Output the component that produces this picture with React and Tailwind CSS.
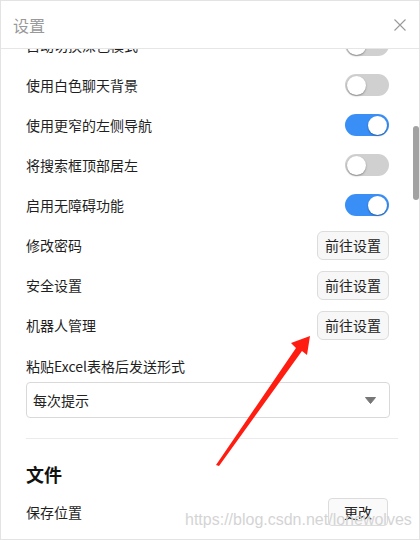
import React from 'react';

const Toggle = ({ on }) => (
	<div
		className={`flex h-[22px] w-[44px] items-center rounded-full px-[2px] ${on ? 'justify-end bg-[#3a8ff6]' : 'justify-start bg-[#d0d0d0]'}`}
	>
		<div className="h-[19px] w-[19px] rounded-full bg-white shadow-[0_1px_2px_rgba(0,0,0,0.35)]" />
	</div>
);

const GoButton = ({ children }) => (
	<button
		type="button"
		className="h-[29px] rounded-[6px] border border-[#dcdcdc] bg-[#f7f7f7] px-[7px] text-[14px] leading-none text-[#222]"
	>
		{children}
	</button>
);

const Row = ({ label, children }) => (
	<div className="flex h-[40px] items-center justify-between pr-px">
		<span className="text-[14px] text-[#1f1f1f]">{label}</span>
		{children}
	</div>
);

export default function App() {
	return (
		<div
			className="relative flex h-[540px] w-[420px] flex-col overflow-hidden border border-[#e3e3e3] bg-white"
			style={{ fontFamily: '"Noto Sans CJK SC", "Noto Sans", sans-serif' }}
		>
			<div className="relative z-10 flex h-[48px] shrink-0 items-center justify-between border-b border-[#e6e6e6] bg-white pl-[12px] pr-[13px]">
				<span className="text-[16px] text-[#999]">设置</span>
				<svg viewBox="0 0 12 12" className="h-[12px] w-[12px]" aria-hidden="true">
					<path d="M0.5 0.5l11 11M11.5 0.5l-11 11" stroke="#9a9a9a" strokeWidth="1.1" fill="none" />
				</svg>
			</div>

			<div className="flex-1 overflow-hidden">
				<div className="mt-[-24px] w-[364px] pl-[25px] box-content">
					<Row label="自动切换深色模式"><Toggle on={false} /></Row>
					<Row label="使用白色聊天背景"><Toggle on={false} /></Row>
					<Row label="使用更窄的左侧导航"><Toggle on /></Row>
					<Row label="将搜索框顶部居左"><Toggle on={false} /></Row>
					<Row label="启用无障碍功能"><Toggle on /></Row>
					<Row label="修改密码"><GoButton>前往设置</GoButton></Row>
					<Row label="安全设置"><GoButton>前往设置</GoButton></Row>
					<Row label="机器人管理"><GoButton>前往设置</GoButton></Row>

					<div className="mt-[11px] h-5 text-[14px] leading-5 text-[#1f1f1f]">粘贴Excel表格后发送形式</div>
					<div className="mt-[6px] flex h-[36px] items-center justify-between rounded-[4px] border border-[#d9d9d9] pl-[6px] pr-[13px]">
						<span className="text-[14px] text-[#222]">每次提示</span>
						<svg viewBox="0 0 11 7" className="h-[7px] w-[11px]" aria-hidden="true">
							<path d="M0.5 0.5h10l-5 6z" fill="#777" stroke="#777" strokeLinejoin="round" />
						</svg>
					</div>

					<div className="mt-[20px] h-px w-[372px] bg-[#ebebeb]" />

					<div className="mt-[21px] text-[18px] font-bold leading-[28px] text-[#111]">文件</div>
					<div className="mt-[4px] flex h-[40px] items-center justify-between pr-[2px]">
						<span className="text-[14px] text-[#1f1f1f]">保存位置</span>
						<button
							type="button"
							className="h-[28px] w-[60px] rounded-[4px] border border-[#dcdcdc] bg-[#fafafa] text-[14px] leading-none text-[#222]"
						>
							更改
						</button>
					</div>
				</div>
			</div>

			<div className="absolute left-[412px] top-[125px] h-[74px] w-[6px] rounded-full bg-[#a2a2a2]" />

			<svg className="pointer-events-none absolute left-[-1px] top-[-1px] h-[540px] w-[420px]" viewBox="0 0 420 540" aria-hidden="true">
				<polygon points="216,465 296,348 291,343 310,336 307,355 302,351 219,466" fill="#ff1d12" />
			</svg>

			<div
				className="pointer-events-none absolute left-[184px] top-[511px] text-[16px] leading-4 text-[#d4d4d4]"
				style={{ fontFamily: '"Liberation Sans", Arial, sans-serif' }}
			>
				https://blog.csdn.net/lonewolves
			</div>
		</div>
	);
}
